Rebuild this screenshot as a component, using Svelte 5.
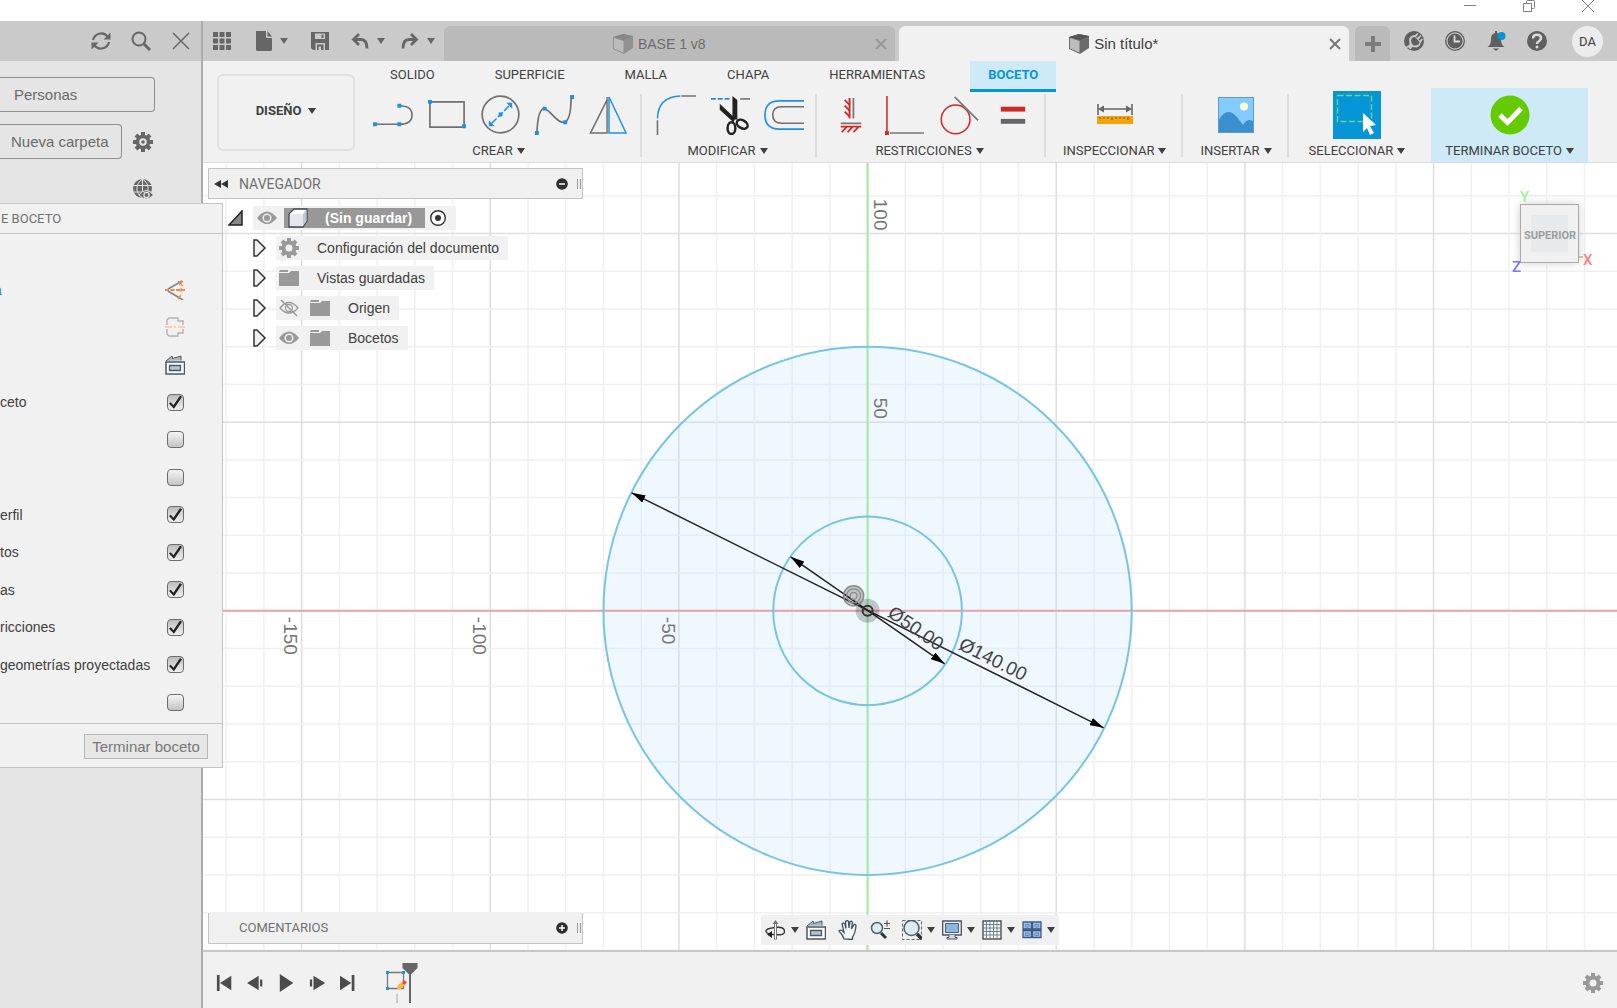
<!--
  App.svelte - CAD workspace in sketch mode

  Data panel on the left, ribbon and drawing canvas on the right,
  with the sketch palette floating over both.
-->
<script lang="ts">
  interface Tool {
    icon: string;
    title: string;
  }

  interface Group {
    label: string;
    tools: Tool[];
    kind?: 'last' | 'finish';
  }

  interface PaletteRow {
    label?: string;
    title: string;
    icon?: string;
    checked?: boolean;
  }

  // Distance in pixels of one grid cell (10 mm)
  const CELL = 37.73;
  const gridLines = Array.from({ length: 81 }, (_, i) => i - 40);

  const icons: Record<string, string> = {
    refresh: '<g fill="none" stroke="#666" stroke-width="2.2"><path d="M2 9a8.300 8.300 0 0 1 14.500-3.500M18 11a8.300 8.300 0 0 1-14.500 3.500"/></g><path fill="#666" d="M19.500 1.500v7h-7zM.5 18.500v-7h7z"/>',
    search: '<circle cx="8" cy="8" r="6.500" fill="none" stroke="#666" stroke-width="2"/><path d="M13 13l6 6" stroke="#666" stroke-width="3"/>',
    close: '<path d="M2 2l16 16M18 2L2 18" stroke="#666" stroke-width="1.500"/>',
    gear: '<path fill="none" stroke="#666" stroke-width="4" d="M10 0v4M10 16v4M0 10h4M16 10h4M3 3l3 3M14 14l3 3M3 17l3-3M14 6l3-3"/><circle cx="10" cy="10" r="5.500" fill="none" stroke="#666" stroke-width="3.500"/><circle cx="10" cy="10" r="1.800" fill="#666"/>',
    gearLight: '<path fill="none" stroke="#999" stroke-width="4" d="M10 0v4M10 16v4M0 10h4M16 10h4M3 3l3 3M14 14l3 3M3 17l3-3M14 6l3-3"/><circle cx="10" cy="10" r="5.500" fill="none" stroke="#999" stroke-width="4"/>',
    globe: '<circle cx="9.500" cy="9.500" r="9.500" fill="#666"/><path d="M0 6.500h19M0 13h19M9.500 0v19M9.500 0C2 5 2 14 9.500 19M9.500 0c7.500 5 7.500 14 0 19" fill="none" stroke="#e5e5e5"/><path d="M6 16q7-9 14.500 0-7 8-14.500 0z" fill="#666" stroke="#e5e5e5"/><circle cx="13.500" cy="16" r="2.600" fill="#666" stroke="#e5e5e5" stroke-width="1.300"/>',
    apps: '<path fill="#666" d="M1 1h5v5H1zM7.500 1h5v5h-5zM14 1h5v5h-5zM1 7.500h5v5H1zM7.500 7.500h5v5h-5zM14 7.500h5v5h-5zM1 14h5v5H1zM7.500 14h5v5h-5zM14 14h5v5h-5z"/>',
    file: '<path fill="#666" d="M2 0h10v7h6v11.500q0 1.500-1.500 1.500h-13Q2 20 2 18.500zM13.500 0l4.500 5.500h-4.500z"/>',
    save: '<path fill="#666" d="M1 1h18v18H3l-2-2z"/><path fill="#cacaca" d="M5 2.500h10V8H5zM5.500 12h9.500v7H5.500z"/><path fill="#666" d="M11.500 3.500h2V7h-2zM7 13.500h6.500V19H11v-3.500H8.500V19H7z"/>',
    undo: '<path d="M9 3L3.500 8.500 9 14M4 8.500h7q6 0 6 9" fill="none" stroke="#666" stroke-width="2.800"/>',
    redo: '<path d="M11 3l5.500 5.500L11 14M16 8.500H9q-6 0-6 9" fill="none" stroke="#666" stroke-width="2.800"/>',
    cube: '<path fill="#6b6b6b" d="M0 3l10-3 10 2v12l-9 6L0 15z"/><path fill="#bcbcbc" d="M1 4l9.500 3v11.500L1 14.500z"/><path fill="#555" d="M0 3l10-3 10 2-9 4z"/>',
    tabClose: '<path d="M1 1l10 10M11 1L1 11" stroke="#777" stroke-width="2"/>',
    plus: '<path d="M10 2v16M2 10h16" stroke="#7b7b7b" stroke-width="4"/>',
    extensions: '<circle cx="10" cy="10" r="10" fill="#5f5f5f"/><path fill="#cacaca" d="M5 8q2-4 6-4l2.500-2 1 1-2.500 3 1 1 3.500-3 1 1-3 3.500 1 1 2.500-2 1 1-2.500 3.500q0 3-4 4.500l-4-.5-2 2.500-3-3 2-2z"/><path fill="#5f5f5f" d="M7 8.500q1.500-3 4-2.500l4.500 5q0 3-4 3.500-4.500 0-4.500-6z"/><path d="M1 18l4-3.500" stroke="#cacaca" stroke-width="1.500"/>',
    clock: '<circle cx="10" cy="10" r="9.300" fill="none" stroke="#5f5f5f" stroke-width="1.300"/><circle cx="10" cy="10" r="7.500" fill="#5f5f5f"/><path d="M9.500 4.500v6H15" fill="none" stroke="#ddd" stroke-width="1.800"/>',
    bell: '<path fill="#5f5f5f" d="M9 0h2v2q4 1 4 6 0 6 3.500 8h-17Q5 14 5 8q0-5 4-6zM7 17.500h6L10 20z"/><circle cx="15.500" cy="5" r="4" fill="#0696d7"/>',
    help: '<circle cx="10" cy="10" r="10" fill="#5f5f5f"/><path d="M6 7.500q0-3.700 4-3.700t4 3.300q0 2-2 3-2 .9-2 3" fill="none" stroke="#ddd" stroke-width="2.500"/><circle cx="10" cy="16" r="1.500" fill="#ddd"/>',
    line: '<path d="M2 30h25M27 11q13 0 13 9.500T27 30" fill="none" stroke="#707070" stroke-width="1.700"/><path fill="#1e90ea" d="M0 28h4v4H0zM25 28h4v4h-4zM25 9h4v4h-4z"/>',
    rect: '<path d="M3 7h35v26H3z" fill="none" stroke="#707070" stroke-width="1.700"/><path fill="#1e90ea" d="M1 5h4v4H1zM36 30h4v4h-4z"/>',
    circle: '<circle cx="20" cy="20" r="18.800" fill="none" stroke="#707070" stroke-width="1.700"/><path d="M11 29l18-18" stroke="#1e90ea" stroke-width="1.500" stroke-dasharray="7 2"/><path fill="#1e90ea" d="M18 18h4v4h-4zM32 8v6l-6-6zM8 32v-6l6 6z"/>',
    spline: '<path d="M2 38q1-23 7-24c6 0 14 16 21 14q7-2 7-26" fill="none" stroke="#707070" stroke-width="1.700"/><path fill="#1e90ea" d="M0 37h4v4H0zM8 12h4v4H8zM29 26h4v4h-4zM36 0h4v4h-4z"/>',
    mirror: '<path d="M18.500 5v34H1.500zM18.500 2v3" fill="none" stroke="#707070" stroke-width="1.500"/><path d="M20.500 2v37H38z" fill="none" stroke="#1e90ea" stroke-width="1.500"/>',
    fillet: '<path d="M26 1h15M1.500 26v15" stroke="#707070" stroke-width="1.600"/><path d="M1.500 24Q2 2 25 1" fill="none" stroke="#1e90ea" stroke-width="1.600"/>',
    trim: '<path d="M1 4h20" stroke="#1e90ea" stroke-width="1.700" stroke-dasharray="5 2"/><path d="M31 4h10" stroke="#707070" stroke-width="1.600"/><path fill="#222" d="M23 1l5 4v20h-5zM10 9l16 15-2 4-14-13z"/><g fill="none" stroke="#222" stroke-width="2.500"><ellipse cx="22" cy="34" rx="4" ry="6"/><ellipse cx="33" cy="30" rx="6" ry="4" transform="rotate(30 33 30)"/></g>',
    offset: '<path d="M41 6H16Q1 6 1 20.500T16 35h25" fill="none" stroke="#1e90ea" stroke-width="1.700"/><path d="M41 12H18q-9 0-9 8.500t9 8.500h23" fill="none" stroke="#707070" stroke-width="1.700"/>',
    horizontal: '<path d="M19 3v21" stroke="#cf2a2a" stroke-width="2"/><path d="M23 3v21M10 29h21" stroke="#777" stroke-width="1.800"/><path d="M10 32.500h21M19 10l-5-5M19 16l-5-5M19 22l-5-5M16 33l-5 5M22 33l-5 5M28 33l-5 5" stroke="#cf2a2a" stroke-width="1.800"/>',
    perpendicular: '<path d="M2 1v36" stroke="#cf2a2a" stroke-width="1.600"/><path d="M5 39h35" stroke="#777" stroke-width="1.600"/><path d="M0 37h4v4H0z" fill="#cf2a2a"/>',
    tangent: '<circle cx="17" cy="25" r="14.700" fill="none" stroke="#cf2a2a" stroke-width="1.600"/><path d="M16 2l24 24" stroke="#777" stroke-width="1.700"/>',
    equal: '<path d="M8 14.500h25" stroke="#cf2a2a" stroke-width="5"/><path d="M8 27h25" stroke="#666" stroke-width="5"/>',
    measure: '<path d="M3 9v11M37 9v11M5 14h30" stroke="#666" stroke-width="1.600"/><path d="M3 14l6-3.500v7zM37 14l-6-3.500v7z" fill="#666"/><path d="M2 21h36v8H2z" fill="#f5a20a"/><path d="M5 22v2M9 22v2M13 22v2M17 22v3M21 22v2M25 22v2M29 22v2M33 22v3" stroke="#6b5420"/>',
    insert: '<path d="M2 2h36v36H2z" fill="#84ccff"/><path d="M2 26Q12 8 24 26l3 4q5-8 11-3v11H2z" fill="#3b8fcd"/><circle cx="28" cy="11.500" r="4" fill="#ffffd0"/><path d="M2.500 2.500h35v35h-35z" fill="none" stroke="#5a9dcc"/>',
    select: '<path fill="#0696d7" d="M0 0h48v48H0z"/><path d="M4.500 4.500h34v26h-34z" fill="none" stroke="#63d88b" stroke-width="1.400" stroke-dasharray="6 2.500"/><path fill="#fff" d="M30 22l13 12-6 1 4 7-4 2-3-7-4 4z"/>',
    finish: '<circle cx="20" cy="20" r="19.500" fill="#63cb00"/><path d="M10 20l7.500 7.500L31 13.500" fill="none" stroke="#fff" stroke-width="5"/>',
    construction: '<path d="M3 9L17 1M3 11l15 9" stroke="#888" stroke-width="1.800"/><path d="M0 10h20" stroke="#f08a4a" stroke-width="1.800" stroke-dasharray="4 1.500"/><path d="M13 1l5 5M18 1l-4 4M13 19l3-4M16 8v4" stroke="#f08a4a" stroke-width="1.300"/>',
    centerline: '<path d="M2 8V3l2-2h9v3h5v4M2 12v5l2 2h9v-3h5v-4" fill="none" stroke="#b3b3b3" stroke-width="1.400"/><path d="M0 10h20" stroke="#f6c3a2" stroke-width="1.300" stroke-dasharray="7 2 2 2"/>',
    lookAt: '<path d="M1 7h18.500v12H1z" fill="#fff" stroke="#4e5862" stroke-width="1.500"/><path d="M4.500 10.500h11v5h-11z" fill="#b9c4d0" stroke="#4e5862" stroke-width="1.300"/><path d="M1 6l6-5 .5 2.500L16 1v4.500" fill="#aeb7c0" stroke="#4e5862"/>',
    eye: '<path d="M0 10q10-13 20 0-10 12-20 0z" fill="#999"/><circle cx="10" cy="10" r="3.800" fill="#999" stroke="#eee" stroke-width="1.500"/>',
    eyeOff: '<path d="M1 10q9-11 18 0-9 10-18 0z" fill="none" stroke="#999" stroke-width="1.300"/><circle cx="10" cy="10" r="3.500" fill="none" stroke="#999" stroke-width="1.300"/><path d="M2 2l16 16" stroke="#999" stroke-width="1.500"/>',
    folder: '<path fill="#999" d="M0 5h10l2-2h8v15H0zM1 2h8v2H0z"/>',
    body: '<path d="M1 6l5-5h13v12l-4 6H1z" fill="#e6e8ee" stroke="#444b55" stroke-width="1.300"/><path d="M2 6l4.500-4H18l-3 4z" fill="#fff"/><path d="M15 6l3.500-4v11L15 18z" fill="#c2c5cf"/>',
    expanded: '<path d="M14 1v14H1z" fill="#888" stroke="#222" stroke-width="1.500"/>',
    collapsed: '<path d="M3 1h3l8 8-8 8H3z" fill="#f0f0f0" stroke="#333" stroke-width="1.500"/>',
    rewind: '<path fill="#333" d="M7 3v8L0 7zM14 3v8L7 7z"/>',
    active: '<circle cx="9" cy="9" r="7.300" fill="#fff" stroke="#333" stroke-width="1.400"/><circle cx="9" cy="9" r="3" fill="#333"/>',
    minus: '<circle cx="6" cy="6" r="5.800" fill="#2d2d2d"/><path d="M3 6h6" stroke="#fff" stroke-width="1.500"/>',
    add: '<circle cx="6" cy="6" r="5.800" fill="#2d2d2d"/><path d="M3 6h6M6 3v6" stroke="#fff" stroke-width="1.500"/>',
    orbit: '<path d="M7 14.500q-6-1-6-3.500t9-3.500 9.500 3.500-8 3.500H5" fill="none" stroke="#333" stroke-width="1.400"/><path d="M10.500 19.500V3" stroke="#777" stroke-width="3"/><path d="M10.500 19V3" stroke="#fff" stroke-width="1"/><path fill="#777" d="M10.500 0l3 4h-6z"/><path fill="#222" d="M2 14.500l5-3.500v7z"/>',
    pan: '<path d="M6 19q-1-4-5-8 1.500-2 4 .5l1 1L4 3.500q2-1.300 3 1l1 4-.5-7Q10-.5 10.500 2l.5 6 1-6.500q2-.8 2.300 1L13.500 9 16 4.500q2-.5 2 1.500-1 8-3.500 11v2.500z" fill="#f4f6f8" stroke="#4b5159" stroke-width="1.300"/>',
    zoom: '<circle cx="7" cy="8" r="5.500" fill="#dcedf0" stroke="#4e6068" stroke-width="1.500"/><path d="M11 13l5 5" stroke="#333" stroke-width="3"/><path d="M14 3.500h6M17 .5v6M14 8.500h6" stroke="#555" stroke-width="1.200"/>',
    fit: '<path d="M.5 .5h19v19H.5z" fill="none" stroke="#666" stroke-dasharray="3 2"/><circle cx="9.500" cy="8" r="7.500" fill="#dcedf0" stroke="#4e6068" stroke-width="1.500"/><path d="M15 14l5 5" stroke="#333" stroke-width="3.500"/>',
    display: '<path d="M.7 1h18.600v14H.7z" fill="#eee" stroke="#4e5560" stroke-width="1.300"/><path d="M3.500 3.500h13v9h-13z" fill="#8fb6e2" stroke="#3e6596"/><path d="M7 15v2.500H5V19h10v-1.500h-2V15" fill="#ddd" stroke="#4e5560"/>',
    grid: '<path d="M1 1h18v18H1z" fill="#fff" stroke="#555" stroke-width="1.500"/><path d="M4.500 1v18M8 1v18M11.500 1v18M15 1v18M1 4.500h18M1 8h18M1 11.500h18M1 15h18" stroke="#77808a"/>',
    views: '<path d="M1 2h8.500v7H1zM10.500 2H19v7h-8.500zM1 10.500h8.500v7H1zM10.500 10.500H19v7h-8.500z" fill="#9fc0e6" stroke="#3c5c88" stroke-width="1.300"/><path d="M3.500 4.500h3.500V7H3.500zM13 4.500h3.500V7H13zM3.500 13h3.500v2.500H3.500zM13 13h3.500v2.500H13z" fill="none" stroke="#6488b6"/>',
    first: '<path fill="#4c4c4c" d="M1 1h3v18H1zM17 2v16L4.500 10z"/>',
    stepBack: '<path fill="#4c4c4c" d="M13 2v16L0 10zM14.500 6H17v8h-2.500z"/>',
    play: '<path fill="#4c4c4c" d="M2 0l15 10L2 20z"/>',
    stepForward: '<path fill="#4c4c4c" d="M5 2v16l13-8zM1 6h2.500v8H1z"/>',
    last: '<path fill="#4c4c4c" d="M16 1h-3v18h3zM0 2v16l12.500-8z"/>',
  };

  const ribbonTabs = ['SOLIDO', 'SUPERFICIE', 'MALLA', 'CHAPA', 'HERRAMIENTAS', 'BOCETO'];
  let activeTab = $state('BOCETO');

  const groups: Group[] = [
    {
      label: 'CREAR',
      tools: [
        { icon: 'line', title: 'Línea' },
        { icon: 'rect', title: 'Rectángulo' },
        { icon: 'circle', title: 'Círculo' },
        { icon: 'spline', title: 'Spline' },
        { icon: 'mirror', title: 'Simetría' },
      ],
    },
    {
      label: 'MODIFICAR',
      tools: [
        { icon: 'fillet', title: 'Empalme' },
        { icon: 'trim', title: 'Recortar' },
        { icon: 'offset', title: 'Desfase' },
      ],
    },
    {
      label: 'RESTRICCIONES',
      tools: [
        { icon: 'horizontal', title: 'Horizontal/Vertical' },
        { icon: 'perpendicular', title: 'Perpendicular' },
        { icon: 'tangent', title: 'Tangente' },
        { icon: 'equal', title: 'Igual' },
      ],
    },
    { label: 'INSPECCIONAR', tools: [{ icon: 'measure', title: 'Medir' }] },
    { label: 'INSERTAR', tools: [{ icon: 'insert', title: 'Imagen' }] },
    { label: 'SELECCIONAR', tools: [{ icon: 'select', title: 'Seleccionar' }], kind: 'last' },
    { label: 'TERMINAR BOCETO', tools: [{ icon: 'finish', title: 'Terminar boceto' }], kind: 'finish' },
  ];

  let paletteRows: PaletteRow[] = $state([
    { label: 'a', title: 'Línea', icon: 'construction' },
    { title: 'Línea central', icon: 'centerline' },
    { title: 'Mirar a', icon: 'lookAt' },
    { label: 'ceto', title: 'Rejilla de boceto', checked: true },
    { title: 'Forzar cursor', checked: false },
    { title: 'Sección', checked: false },
    { label: 'erfil', title: 'Perfil', checked: true },
    { label: 'tos', title: 'Puntos', checked: true },
    { label: 'as', title: 'Cotas', checked: true },
    { label: 'ricciones', title: 'Restricciones', checked: true },
    { label: 'geometrías proyectadas', title: 'Geometrías', checked: true },
    { title: 'Boceto 3D', checked: false },
  ]);

  const treeItems = [
    { label: 'Configuración del documento', icons: ['gearLight'] },
    { label: 'Vistas guardadas', icons: ['folder'] },
    { label: 'Origen', icons: ['eyeOff', 'folder'] },
    { label: 'Bocetos', icons: ['eye', 'folder'] },
  ];

  const viewTools = [
    { icon: 'orbit', title: 'Orbitar', menu: true },
    { icon: 'lookAt', title: 'Mirar a', menu: false },
    { icon: 'pan', title: 'Encuadre', menu: false },
    { icon: 'zoom', title: 'Zoom', menu: false },
    { icon: 'fit', title: 'Ajustar', menu: true },
    { icon: 'display', title: 'Visualización', menu: true },
    { icon: 'grid', title: 'Rejilla', menu: true },
    { icon: 'views', title: 'Ventanas', menu: true },
  ];

  const playback = [
    { icon: 'first', title: 'Inicio' },
    { icon: 'stepBack', title: 'Anterior' },
    { icon: 'play', title: 'Reproducir' },
    { icon: 'stepForward', title: 'Siguiente' },
    { icon: 'last', title: 'Fin' },
  ];
</script>

{#snippet icon(name: string, size = 20, box = size)}
  <svg class="icon" width={size} height={size} viewBox="0 0 {box} {box}" aria-hidden="true">
    {@html icons[name]}
  </svg>
{/snippet}

{#snippet caret()}
  <svg class="caret" width="8" height="6" viewBox="0 0 8 6" aria-hidden="true">
    <path d="M0 0h8L4 6z" fill="currentColor" />
  </svg>
{/snippet}

<div class="app">
  <header class="window-bar">
    <button aria-label="Minimizar"><svg width="12" height="12"><path d="M0 5.500h12" /></svg></button>
    <button aria-label="Restaurar">
      <svg width="12" height="12"><path d="M.5 3.500h8v8h-8zM3.500 3.500V1.500q0-1 1-1h6q1 0 1 1v6q0 1-1 1h-2" /></svg>
    </button>
    <button aria-label="Cerrar"><svg width="12" height="12"><path d="M0 0l12 12M12 0L0 12" /></svg></button>
  </header>

  <div class="main">
    <aside class="data-panel">
      <div class="data-header">
        <button aria-label="Actualizar">{@render icon('refresh')}</button>
        <button aria-label="Buscar">{@render icon('search')}</button>
        <button aria-label="Cerrar panel">{@render icon('close')}</button>
      </div>
      <div class="data-body">
        <button class="outlined people">Personas</button>
        <div class="data-row">
          <button class="outlined">Nueva carpeta</button>
          <button aria-label="Configuración">{@render icon('gear')}</button>
        </div>
        <button class="globe" aria-label="Web">{@render icon('globe')}</button>
      </div>
    </aside>

    <div class="workspace">
      <div class="tab-strip">
        <div class="quick">
          <button aria-label="Panel">{@render icon('apps')}</button>
          <button class="file" aria-label="Archivo">{@render icon('file')}{@render caret()}</button>
          <button class="save" aria-label="Guardar">{@render icon('save')}</button>
          <button class="undo" aria-label="Deshacer">{@render icon('undo')}{@render caret()}</button>
          <button class="redo" aria-label="Rehacer">{@render icon('redo')}{@render caret()}</button>
        </div>
        <div class="doc-tab inactive">
          <span class="doc-name">{@render icon('cube')}BASE 1 v8</span>
          <button aria-label="Cerrar BASE 1">{@render icon('tabClose', 12)}</button>
        </div>
        <div class="doc-tab">
          <span class="doc-name">{@render icon('cube')}Sin título*</span>
          <button aria-label="Cerrar Sin título">{@render icon('tabClose', 12)}</button>
        </div>
        <button class="new-tab" aria-label="Nuevo">{@render icon('plus')}</button>
        <div class="account">
          <button aria-label="Extensiones">{@render icon('extensions')}</button>
          <button aria-label="Trabajos">{@render icon('clock')}</button>
          <button aria-label="Notificaciones">{@render icon('bell')}</button>
          <button aria-label="Ayuda">{@render icon('help')}</button>
          <button class="avatar">DA</button>
        </div>
      </div>

      <div class="ribbon">
        <button class="design">DISEÑO {@render caret()}</button>
        <div class="ribbon-content">
          <nav class="ribbon-tabs">
            {#each ribbonTabs as tab}
              <button class:active={tab === activeTab} onclick={() => (activeTab = tab)}>{tab}</button>
            {/each}
          </nav>
          <div class="groups">
            {#each groups as group}
              {@const single = group.tools.length === 1}
              <div class="group {group.kind ?? ''}" class:single>
                <div class="tools">
                  {#each group.tools as tool}
                    {@const size = tool.icon === 'select' ? 48 : 40}
                    <button class="tool" title={tool.title} aria-label={tool.title}>
                      {@render icon(tool.icon, size, single ? size : 41)}
                    </button>
                  {/each}
                </div>
                <button class="group-label">{group.label}{@render caret()}</button>
              </div>
            {/each}
          </div>
        </div>
      </div>

      <main class="canvas">
        <svg class="drawing" width="100%" height="100%">
          <defs>
            <marker id="arrow" viewBox="0 0 14 8" refX="14" refY="4" markerWidth="14" markerHeight="8" markerUnits="userSpaceOnUse" orient="auto-start-reverse">
              <path d="M0 0l14 4-14 4z" />
            </marker>
          </defs>
          <!-- origin of the sketch; everything inside is measured from it -->
          <svg x="47%" y="56.900%" overflow="visible">
            {#each gridLines as n}
              <path class="grid-line" class:major={n % 5 === 0} d="M{n * CELL} -1600V1600M-1600 {n * CELL}H1600" />
            {/each}
            <circle class="profile" r={CELL * 7} />
            <path class="axis-y" d="M0-1600V1600" />
            <path class="axis-x" d="M-1600 0H1600" />
            <circle class="curve" r={CELL * 7} />
            <circle class="curve" r={CELL * 2.5} />

            <g class="scale">
              <text transform="translate(6 -412) rotate(90)">100</text>
              <text transform="translate(6 -213) rotate(90)">50</text>
              <text transform="translate(-584 6) rotate(90)">-150</text>
              <text transform="translate(-395 6) rotate(90)">-100</text>
              <text transform="translate(-206 6) rotate(90)">-50</text>
            </g>

            <path class="dimension" d="M-236-118L236 117" marker-start="url(#arrow)" marker-end="url(#arrow)" />
            <path class="dimension" d="M-77-54L77 53" marker-start="url(#arrow)" marker-end="url(#arrow)" />
            <circle class="halo" r="12" />
            <circle class="center" r="5" />
            <g class="concentric" transform="translate(-14 -15)">
              <circle class="halo" r="11" />
              <circle r="10" /><circle r="7" /><circle r="3.500" />
            </g>
            <g class="dim-text">
              <text transform="translate(19 5) rotate(34.600)">Ø50.00</text>
              <text transform="translate(90 38) rotate(26.400)">Ø140.00</text>
            </g>
          </svg>
        </svg>

        <section class="browser">
          <div class="bar">
            <button aria-label="Contraer">{@render icon('rewind', 14)}</button>
            <h2>NAVEGADOR</h2>
            <button class="toggle" aria-label="Ocultar">{@render icon('minus', 12)}</button>
            <span class="grip"></span>
          </div>
          <ul class="tree">
            <li class="root">
              {@render icon('expanded', 16)}
              <div class="item">
                {@render icon('eye')}
                <span class="root-name">{@render icon('body')}<b>(Sin guardar)</b></span>
                {@render icon('active', 18)}
              </div>
            </li>
            {#each treeItems as item}
              <li>
                {@render icon('collapsed', 18)}
                <div class="item">
                  {#each item.icons as name}
                    {@render icon(name)}
                  {/each}
                  <span>{item.label}</span>
                </div>
              </li>
            {/each}
          </ul>
        </section>

        <svg class="view-cube" width="90" height="96" role="img" aria-label="Vista superior">
          <text class="y" x="11" y="17">Y</text>
          <text class="x" x="74" y="80">X</text>
          <path d="M69 72h5" stroke="#ff9a9a" stroke-width="2" />
          <rect class="face" x="11.500" y="19.500" width="58" height="58" />
          <rect x="22" y="30" width="37" height="37" fill="#e7e9eb" />
          <text class="face-name" x="41" y="54" text-anchor="middle">SUPERIOR</text>
          <text class="z" x="3" y="87">Z</text>
        </svg>

        <div class="bar comments">
          <h2>COMENTARIOS</h2>
          <button class="toggle" aria-label="Mostrar comentarios">{@render icon('add', 12)}</button>
          <span class="grip"></span>
        </div>

        <div class="view-tools">
          {#each viewTools as tool}
            <button class:menu={tool.menu} aria-label={tool.title}>
              {@render icon(tool.icon)}
              {#if tool.menu}{@render caret()}{/if}
            </button>
          {/each}
        </div>
      </main>

      <footer class="timeline">
        {#each playback as step}
          <button aria-label={step.title}>{@render icon(step.icon, 18, 20)}</button>
        {/each}
        <svg class="history" width="36" height="44" role="img" aria-label="Boceto1">
          <path d="M3.500 11.500h16v16h-16z" fill="none" stroke="#777" stroke-width="1.300" />
          <path d="M2 10h3v3H2zM18 10h3v3h-3zM2 26h3v3H2z" fill="#1e90ea" />
          <path d="M13 28l1-4 5-4 3 3-5 5z" fill="#fbb63b" />
          <circle cx="20.500" cy="21.500" r="2" fill="#f04a4a" />
          <path d="M13 33v9" stroke="#ccc" stroke-width="2" />
          <path d="M18.500 2h15v5l-6 6h-3l-6-6z" fill="#666" />
          <path d="M26 8v34" stroke="#666" stroke-width="2" />
        </svg>
        <button class="settings" aria-label="Preferencias">{@render icon('gearLight')}</button>
      </footer>
    </div>

    <section class="palette">
      <h2>E BOCETO</h2>
      <div class="palette-rows">
        {#each paletteRows as row, i}
          <div class="palette-row">
            {#if row.icon}
              <span class="link">{row.label ?? ''}</span>
              <button aria-label={row.title}>{@render icon(row.icon)}</button>
            {:else}
              <label for="option-{i}">{row.label ?? ''}</label>
              <input id="option-{i}" type="checkbox" aria-label={row.title} bind:checked={row.checked} />
            {/if}
          </div>
        {/each}
      </div>
      <div class="palette-footer">
        <button>Terminar boceto</button>
      </div>
    </section>
  </div>
</div>

<style>
  :global(body) {
    overflow: hidden;
  }

  .app {
    display: flex;
    flex-direction: column;
    height: 100vh;
    background: #fff;
    color: #404040;
    font-family: 'Liberation Sans', Arial, sans-serif;
    font-size: 14px;
  }

  button {
    display: flex;
    align-items: center;
    justify-content: center;
    padding: 0;
    border: none;
    background: none;
    color: inherit;
    font: inherit;
    cursor: pointer;
  }

  h2 {
    margin: 0;
    color: #707070;
    font: 13px/20px Roboto, sans-serif;
  }

  .icon,
  .caret {
    display: block;
    flex-shrink: 0;
  }

  .window-bar {
    display: flex;
    flex-shrink: 0;
    align-items: flex-start;
    justify-content: flex-end;
    gap: 47px;
    height: 21px;
    padding-right: 23px;
  }

  .window-bar path {
    fill: none;
    stroke: #808080;
  }

  .main {
    position: relative;
    display: flex;
    flex: 1;
    min-height: 0;
  }

  /* Data panel */
  .data-panel {
    flex-shrink: 0;
    width: 201px;
    border-right: 2px solid #acacac;
    background: #e5e5e5;
    color: #6a6a6a;
    font-size: 15px;
  }

  .data-header {
    display: flex;
    align-items: center;
    justify-content: flex-end;
    gap: 20px;
    height: 40px;
    padding-right: 10px;
    background: #cacaca;
  }

  .data-body {
    display: flex;
    flex-direction: column;
    gap: 12px;
    padding: 16px 48px 0 0;
  }

  .outlined {
    height: 35px;
    border: 1px solid #8f8f8f;
    border-left: none;
    border-radius: 0 4px 4px 0;
    padding: 0 12px 0 11px;
    white-space: nowrap;
  }

  .people {
    justify-content: flex-start;
    margin-right: -2px;
    padding-left: 14px;
  }

  .data-row {
    display: flex;
    align-items: center;
    justify-content: space-between;
  }

  .globe {
    align-self: flex-end;
    margin-top: 8px;
  }

  /* Document tabs */
  .workspace {
    display: flex;
    flex: 1;
    flex-direction: column;
    min-width: 0;
  }

  .tab-strip {
    display: flex;
    flex-shrink: 0;
    align-items: flex-end;
    height: 40px;
    background: #cacaca;
    font-size: 15px;
  }

  .quick {
    display: flex;
    align-items: center;
    width: 241px;
    height: 40px;
    color: #666;
  }

  .quick button {
    gap: 6px;
    margin-left: 9px;
  }

  .quick .file {
    margin-left: 22px;
  }

  .quick .save {
    margin-left: 22px;
  }

  .quick .undo {
    margin-left: 20px;
    gap: 7px;
  }

  .quick .redo {
    margin-left: 15px;
    gap: 7px;
  }

  .doc-tab {
    display: flex;
    flex: 1;
    align-items: center;
    height: 35px;
    margin-right: 4px;
    padding-right: 8px;
    border-radius: 6px 6px 0 0;
    background: #f1f1f1;
  }

  .doc-tab.inactive {
    background: #bababa;
    color: #6c6c6c;
    font-size: 14px;
  }

  .inactive .icon {
    opacity: 0.5;
  }

  .doc-name {
    display: flex;
    flex: 1;
    align-items: center;
    justify-content: center;
    gap: 5px;
  }

  .new-tab {
    width: 35px;
    height: 35px;
    margin-left: 2px;
    border-radius: 6px 6px 0 0;
    background: #bababa;
  }

  .account {
    display: flex;
    align-items: center;
    gap: 21px;
    height: 40px;
    padding: 0 14px 0 14px;
  }

  .avatar {
    width: 31px;
    height: 31px;
    margin-left: 4px;
    border-radius: 50%;
    background: #ececec;
    font: 13px Roboto, sans-serif;
  }

  /* Ribbon */
  .ribbon {
    display: flex;
    flex-shrink: 0;
    height: 101px;
    border-bottom: 1px solid #dcdcdc;
    background: #f1f1f1;
    font: 13px/16px Roboto, sans-serif;
  }

  .design {
    gap: 7px;
    width: 138px;
    height: 77px;
    margin: 13px 0 0 14px;
    padding-bottom: 3px;
    border: 2px solid #e0e0e0;
    border-radius: 6px;
    font-weight: 700;
  }

  .ribbon-content {
    flex: 1;
    min-width: 0;
  }

  .ribbon-tabs {
    display: flex;
    gap: 30px;
    height: 31px;
    padding-left: 20px;
  }

  .ribbon-tabs button {
    height: 31px;
    padding: 0 15px;
    border-bottom: 3px solid transparent;
  }

  .ribbon-tabs .active {
    padding: 0 18px;
    border-bottom-color: #0696d7;
    background: #cdeaf6;
    color: #0696d7;
    font-weight: 700;
  }

  .groups {
    display: flex;
    margin: -4px 0 0 4px;
  }

  .group {
    display: flex;
    flex-direction: column;
    align-items: center;
    height: 74px;
    padding: 0 6px 0 7px;
    background: linear-gradient(#ddd, #ddd) right 6px / 2px 63px no-repeat;
  }

  .group.single {
    padding: 0 17px;
  }

  .group.last {
    padding: 0 26px 0 20px;
    background: none;
  }

  .group.finish {
    padding: 0 14px;
    background: #cdeaf6;
  }

  .tools {
    display: flex;
  }

  .tool {
    width: 54px;
    height: 53px;
  }

  .group-label {
    gap: 4px;
    height: 20px;
    margin-right: 5px;
    white-space: nowrap;
  }

  .single .group-label {
    margin-right: 0;
  }

  /* Canvas */
  .canvas {
    position: relative;
    flex: 1;
    min-height: 0;
    overflow: hidden;
    background: #fff;
  }

  .drawing {
    display: block;
  }

  .grid-line {
    fill: none;
    stroke: #f0f0f0;
    stroke-width: 1.5;
  }

  .grid-line.major {
    stroke: #dedede;
  }

  .profile {
    fill: rgba(190, 228, 250, 0.25);
  }

  .axis-y {
    stroke: #a6e8a6;
    stroke-width: 2;
  }

  .axis-x {
    stroke: #e8a3a3;
    stroke-width: 2;
  }

  .curve {
    fill: none;
    stroke: #78c4e6;
    stroke-width: 2;
  }

  .scale {
    fill: #777;
    font-size: 19px;
  }

  .dimension {
    stroke: #222;
    stroke-width: 1.5;
  }

  .halo {
    fill: rgba(0, 0, 0, 0.2);
  }

  .center {
    fill: none;
    stroke: #333;
    stroke-width: 2;
  }

  .concentric circle:not(.halo) {
    fill: none;
    stroke: #888;
    stroke-width: 1.3;
  }

  .dim-text {
    fill: #444;
    font-size: 19px;
  }

  .browser {
    position: absolute;
    top: 5px;
    left: 5px;
    width: 375px;
  }

  .bar {
    display: flex;
    align-items: center;
    box-sizing: border-box;
    width: 375px;
    height: 31px;
    padding-left: 5px;
    border: 1px solid #c4c4c4;
    background: #f0f0f0;
  }

  .bar h2 {
    margin-left: 11px;
  }

  .browser h2 {
    font-size: 14px;
  }

  .toggle {
    margin-left: auto;
  }

  .grip {
    width: 1px;
    height: 10px;
    margin: 0 1px 0 9px;
    padding-right: 1px;
    border: 1px solid #999;
    border-width: 0 1px;
  }

  .tree {
    margin: 4px 0 0;
    padding: 0;
    list-style: none;
  }

  .tree li {
    display: flex;
    align-items: center;
    gap: 7px;
    height: 30px;
    padding-left: 43px;
  }

  .tree li.root {
    gap: 9px;
    padding-left: 20px;
  }

  .item {
    display: flex;
    align-items: center;
    gap: 11px;
    height: 24px;
    padding: 0 9px 0 3px;
    background: #f1f1f1;
  }

  .item > span {
    margin-left: 7px;
  }

  .root .item {
    gap: 4px;
    padding: 0 9px 0 4px;
  }

  .item > .root-name {
    display: flex;
    align-items: center;
    gap: 17px;
    height: 20px;
    margin-left: 3px;
    padding: 0 13px 0 4px;
    background: #989898;
    color: #fff;
  }

  .view-cube {
    position: absolute;
    top: 22px;
    right: 18px;
    font: 500 15px Roboto, sans-serif;
  }

  .face {
    fill: #f0f0f0;
    stroke: #aaa;
    filter: drop-shadow(0 0 4px #ccc);
  }

  .face-name {
    fill: #9a9ea2;
    font-size: 11px;
    font-weight: 700;
  }

  .x {
    fill: #ff8080;
  }

  .y {
    fill: #98f598;
  }

  .z {
    fill: #7a7af5;
  }

  .comments {
    position: absolute;
    bottom: 6px;
    left: 5px;
    border-top: none;
  }

  .comments h2 {
    margin-left: 25px;
  }

  .view-tools {
    position: absolute;
    bottom: 5px;
    left: 50%;
    display: flex;
    align-items: center;
    gap: 12px;
    height: 30px;
    padding: 0 4px;
    background: #f0f0f0;
    transform: translateX(-50%);
  }

  .view-tools .menu {
    gap: 5px;
    margin-right: -5px;
  }

  .view-tools .menu:first-child {
    gap: 6px;
    margin-right: -5px;
  }

  .view-tools .menu:last-child {
    margin-right: 0;
  }

  /* Timeline */
  .timeline {
    display: flex;
    flex-shrink: 0;
    align-items: center;
    gap: 13px;
    height: 51px;
    padding: 5px 14px 0 13px;
    border-top: 2px solid #c8c8c8;
    background: #f1f1f1;
  }

  .timeline .history {
    margin-left: 13px;
  }

  .settings {
    margin-left: auto;
  }

  /* Floating sketch palette */
  .palette {
    position: absolute;
    top: 182px;
    left: 0;
    width: 222px;
    border: 1px solid #c4c4c4;
    border-left: none;
    background: #f1f1f1;
  }

  .palette h2 {
    height: 24px;
    padding: 5px 0 0 1px;
    border-bottom: 1px solid #c4c4c4;
  }

  .palette-rows {
    display: grid;
    grid-template-rows: repeat(12, 1fr);
    height: 450px;
    padding: 37px 0 2px;
  }

  .palette-row {
    display: flex;
    align-items: center;
    justify-content: space-between;
    padding-right: 37px;
    overflow: hidden;
  }

  .link {
    margin-left: -6px;
    color: #2b7fc0;
  }

  input[type='checkbox'] {
    width: 17px;
    height: 17px;
    margin: 0 1px 0 0;
    border: 1px solid #6c6c6c;
    border-radius: 4px;
    appearance: none;
    background: linear-gradient(#f4f4f4, #c4c4c4);
  }

  input[type='checkbox']:checked {
    background: linear-gradient(#bcbcbc, #f0f0f0);
  }

  input[type='checkbox']:checked::before {
    content: '';
    display: block;
    width: 13px;
    height: 13px;
    margin: 1px;
    background: #222;
    clip-path: polygon(0 60%, 14% 50%, 34% 74%, 84% 0, 100% 8%, 38% 100%);
  }

  .palette-footer {
    display: flex;
    justify-content: flex-end;
    height: 33px;
    padding: 10px 14px 0 0;
    border-top: 1px solid #c4c4c4;
  }

  .palette-footer button {
    width: 124px;
    height: 25px;
    border: 1px solid #b8b8b8;
    background: #e6e6e6;
    color: #777;
    font-size: 15px;
  }
</style>
